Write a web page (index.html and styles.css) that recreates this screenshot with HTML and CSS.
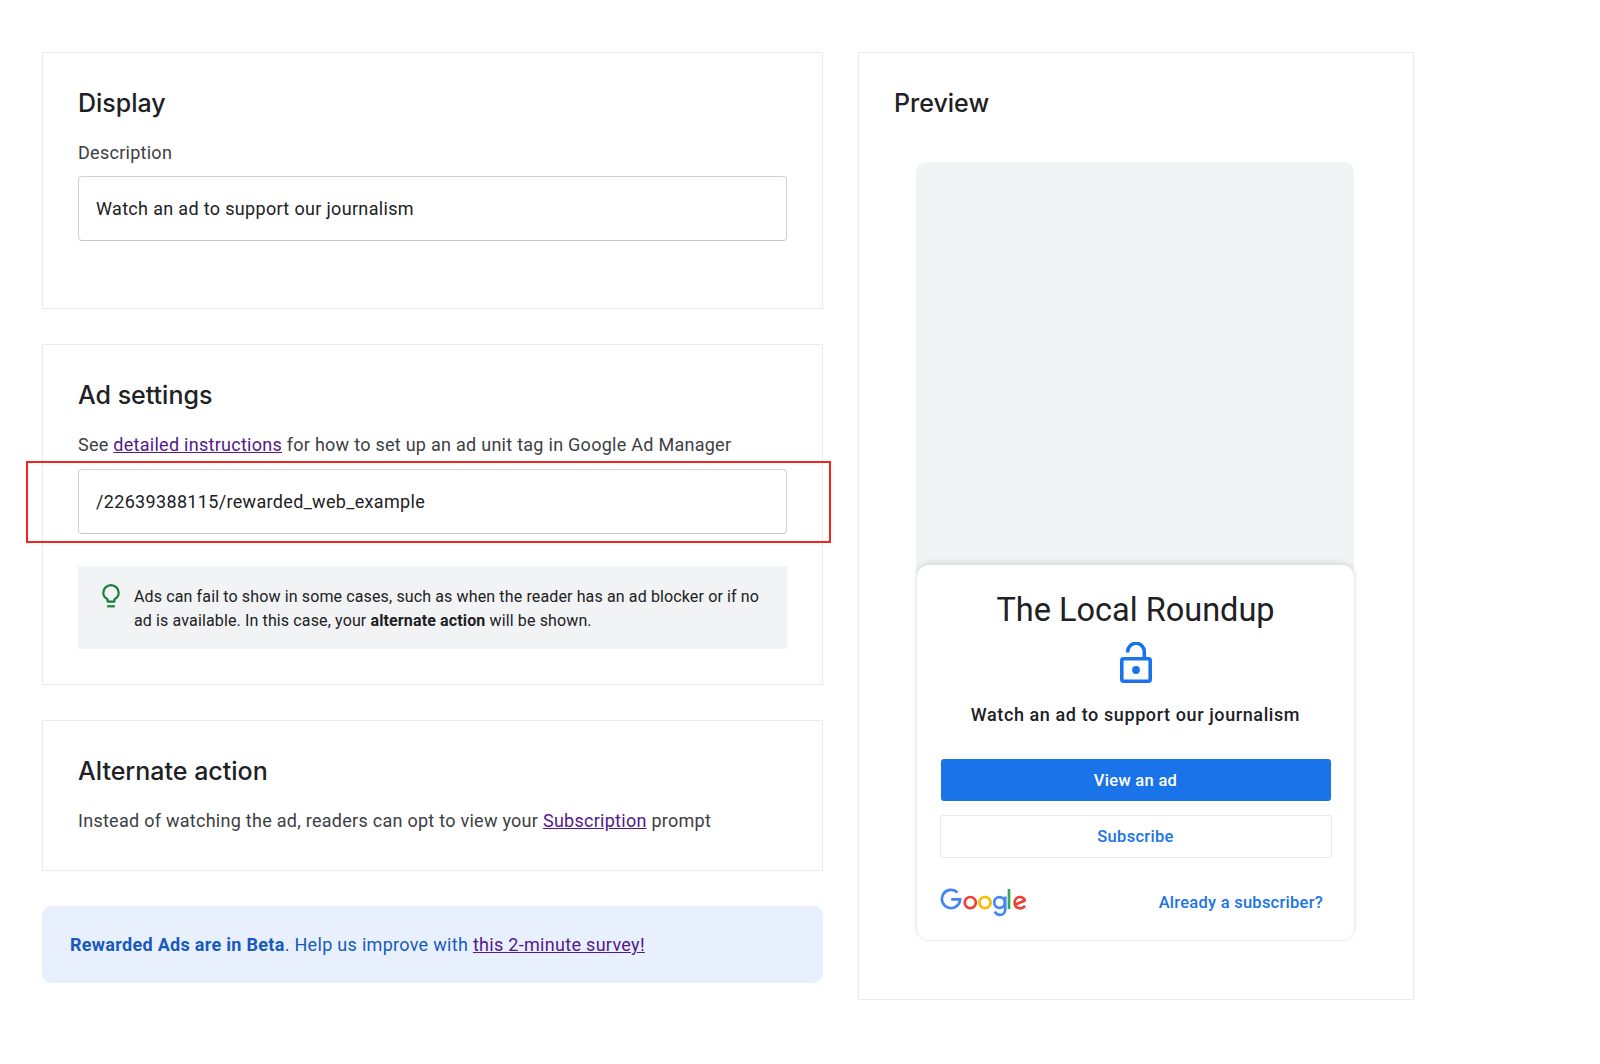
FILE: index.html
```html
<!DOCTYPE html>
<html lang="en">
<head>
<meta charset="utf-8">
<title>Rewarded Ads settings</title>
<link rel="stylesheet" href="styles.css">
</head>
<body>
<main class="page">
  <div class="left">
    <section class="card">
      <h2 class="title">Display</h2>
      <p class="line">Description</p>
      <div class="field">Watch an ad to support our journalism</div>
      <div class="spacer"></div>
    </section>
    <section class="card">
      <h2 class="title">Ad settings</h2>
      <p class="line">See <a href="#" class="link">detailed instructions</a> for how to set up an ad unit tag in Google Ad Manager</p>
      <div class="field-wrap">
        <div class="field">/22639388115/rewarded_web_example</div>
        <div class="highlight"></div>
      </div>
      <div class="note">
        <svg class="bulb" width="18" height="24" viewBox="0 0 18 24" fill="none" stroke="#188038" stroke-width="2.2">
          <path d="M5.6 17.6v-2.3C3 14 1.3 11.6 1.3 8.8a7.7 7.7 0 0 1 15.4 0c0 2.8-1.7 5.2-4.3 6.5v2.3z" stroke-linejoin="round"/>
          <path d="M5.2 22.3h7.6"/>
        </svg>
        <p class="note-text">Ads can fail to show in some cases, such as when the reader has an ad blocker or if no ad is available. In this case, your <strong>alternate action</strong> will be shown.</p>
      </div>
    </section>
    <section class="card card-last">
      <h2 class="title">Alternate action</h2>
      <p class="line">Instead of watching the ad, readers can opt to view your <a href="#" class="link">Subscription</a> prompt</p>
    </section>
    <div class="banner"><strong>Rewarded Ads are in Beta</strong>. Help us improve with <a href="#" class="link">this 2-minute survey!</a></div>
  </div>
  <section class="card preview">
    <h2 class="title">Preview</h2>
    <div class="stage"></div>
    <div class="prompt">
      <div class="pub">The Local Roundup</div>
      <svg class="lock" width="32" height="41" viewBox="0 0 32 41" fill="none" stroke="#1a73e8" stroke-width="3.6">
        <path d="M7.7 10.5V9.6a8.3 8.3 0 0 1 16.6 0v7"/>
        <rect x="1.800" y="16.800" width="28.400" height="22.400" rx="1.600" stroke-linejoin="round"/>
        <circle cx="16" cy="28" r="3.900" fill="#1a73e8" stroke="none"/>
      </svg>
      <div class="desc">Watch an ad to support our journalism</div>
      <div class="btn btn-primary">View an ad</div>
      <div class="btn btn-outline">Subscribe</div>
      <div class="foot">
        <svg class="google" width="86" height="29" viewBox="0 0 86 29" fill="none" stroke-width="2.7">
          <path d="M17.4 4.500A9.100 9.100 0 1 0 20.100 11.300H11.200" stroke="#4285f4"/>
          <circle cx="30.300" cy="14.600" r="5.600" stroke="#ea4335"/>
          <circle cx="45" cy="14.600" r="5.600" stroke="#fbbc05"/>
          <circle cx="59.500" cy="14.500" r="5.300" stroke="#4285f4"/>
          <path d="M65.200 8.600V21.400c0 3.600-2.400 5.500-5.400 5.500-2.300 0-4.200-1.300-5-3.300" stroke="#4285f4"/>
          <path d="M69 1V21" stroke="#34a853"/>
          <path d="M74.800 16.800 85 12.500C84.100 10.300 82.200 9 80.100 9c-3.100 0-5.500 2.400-5.500 5.700s2.400 5.600 5.500 5.600c2.100 0 3.900-1 4.900-2.700" stroke="#ea4335"/>
        </svg>
        <a href="#" class="already">Already a subscriber?</a>
      </div>
    </div>
  </section>
</main>
</body>
</html>
```

FILE: styles.css
```css
* { box-sizing: border-box; }
html, body { margin: 0; background: #fff; }
body {
  font-family: Roboto, "Liberation Sans", sans-serif;
  color: #3c4043;
}
.page {
  display: flex;
  align-items: flex-start;
  gap: 35px;
  padding: 52px 0 0 42px;
  min-height: 1064px;
}
.left {
  display: flex;
  flex-direction: column;
  gap: 35px;
  width: 781px;
}
.card {
  border: 1px solid #eaebed;
  padding: 35px;
}
.card-last { padding-bottom: 37px; }
.title {
  margin: 0;
  font-family: Inter, Roboto, sans-serif;
  font-size: 25px;
  line-height: 30px;
  font-weight: 500;
  color: #202124;
}
.line {
  margin: 23px 0 0;
  font-size: 18px;
  line-height: 24px;
  letter-spacing: .27px;
  color: #3c4043;
}
.link { color: #52188c; text-decoration: underline; }
.field {
  margin-top: 11px;
  height: 65px;
  padding-left: 17px;
  display: flex;
  align-items: center;
  border: 1px solid #cfd1d3;
  border-bottom-color: #c4c6c8;
  border-radius: 4px;
  font-size: 18px;
  letter-spacing: .33px;
  color: #202124;
}
.spacer { height: 32px; }
.field-wrap {
  position: relative;
  padding-top: 1px;
}
.highlight {
  position: absolute;
  left: -52px;
  right: -44px;
  top: 4px;
  bottom: -9px;
  border: 2px solid #f4241c;
  pointer-events: none;
}
.note {
  margin-top: 32px;
  height: 83px;
  padding: 19px 24px 0 24px;
  display: flex;
  gap: 14px;
  background: #f1f3f4;
}
.bulb { flex: none; margin-top: -1px; }
.note-text {
  margin: 0;
  font-size: 16px;
  line-height: 24px;
  letter-spacing: .13px;
  color: #202124;
}
.note-text strong { font-weight: 700; }
.banner {
  height: 77px;
  padding-left: 28px;
  display: flex;
  align-items: center;
  white-space: pre-wrap;
  background: #e8f0fd;
  border-radius: 10px;
  font-size: 18px;
  letter-spacing: .3px;
  color: #185abc;
}
.banner strong { font-weight: 700; }
.preview {
  width: 556px;
  padding-bottom: 59px;
}
.stage {
  margin: 44px 24px 0 22px;
  height: 410px;
  background: #f1f3f4;
  border-radius: 10px 10px 0 0;
}
.prompt {
  position: relative;
  margin: -7px 24px 0 23px;
  height: 375px;
  padding: 25px 23px 0;
  display: flex;
  flex-direction: column;
  align-items: center;
  background: #fff;
  border-radius: 12px;
  box-shadow: 0 -2px 6px -1px rgba(60, 64, 67, .2), 0 0 0 1px #f4f5f6;
}
.pub {
  font-size: 32.500px;
  line-height: 40px;
  color: #202124;
}
.lock { margin-top: 12px; display: block; }
.desc {
  margin-top: 20px;
  font-size: 18px;
  line-height: 24px;
  font-weight: 500;
  letter-spacing: .6px;
  color: #202124;
}
.btn {
  display: flex;
  align-items: center;
  justify-content: center;
  font-size: 16.500px;
  font-weight: 500;
  letter-spacing: .3px;
}
.btn-primary {
  margin-top: 32px;
  width: 390px;
  height: 42px;
  border-radius: 3px;
  background: #1a73e8;
  color: #fff;
}
.btn-outline {
  margin-top: 14px;
  width: 392px;
  height: 43px;
  border: 1px solid #e8e9eb;
  border-radius: 3px;
  color: #1a73e8;
}
.foot {
  margin-top: 30px;
  width: 100%;
  padding-right: 8px;
  display: flex;
  align-items: center;
  justify-content: space-between;
}
.google { display: block; }
.already {
  font-size: 16.500px;
  font-weight: 500;
  letter-spacing: .25px;
  color: #1a73e8;
  text-decoration: none;
}
```
